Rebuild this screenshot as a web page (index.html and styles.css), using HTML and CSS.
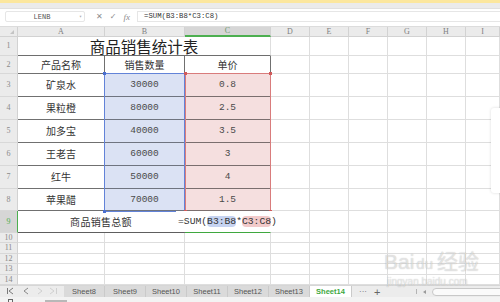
FILE: index.html
```html
<!DOCTYPE html>
<html lang="zh-CN">
<head>
  <meta charset="UTF-8">
  <title>商品销售统计表</title>
  <link rel="stylesheet" href="styles.css">
</head>
<body>
  <div class="app">

    <!-- ribbon edge -->
    <div class="top-strip"></div>
    <div class="ribbon-edge"></div>

    <!-- formula bar -->
    <div class="formula-bar">
      <div class="name-box">LENB<span class="nb-arrow">▾</span></div>
      <div class="fb-icons">
        <span class="fb-x">✕</span>
        <span class="fb-ok">✓</span>
        <span class="fb-fx">fx</span>
      </div>
      <div class="formula-input">=SUM(B3:B8*C3:C8)</div>
    </div>

    <!-- sheet -->
    <div class="sheet">
      <table class="grid">
        <colgroup>
          <col class="c-rh"><col class="c-a"><col class="c-b"><col class="c-c">
          <col class="c-n"><col class="c-n"><col class="c-n"><col class="c-n"><col class="c-n"><col class="c-i">
        </colgroup>
        <tr class="r-head">
          <th class="corner"></th><th class="ch">A</th><th class="ch">B</th><th class="ch ch-active">C</th>
          <th class="ch">D</th><th class="ch">E</th><th class="ch">F</th><th class="ch">G</th><th class="ch">H</th><th class="ch">I</th>
        </tr>
        <tr class="r-title">
          <th class="rh">1</th><td colspan="3" class="title">商品销售统计表</td>
          <td></td><td></td><td></td><td></td><td></td><td></td>
        </tr>
        <tr class="r-field">
          <th class="rh">2</th><td class="tb">产品名称</td><td class="tb">销售数量</td><td class="tb">单价</td>
          <td></td><td></td><td></td><td></td><td></td><td></td>
        </tr>
        <tr class="r-data">
          <th class="rh">3</th><td class="tb">矿泉水</td><td class="tb num qty">30000</td><td class="tb num price">0.8</td>
          <td></td><td></td><td></td><td></td><td></td><td></td>
        </tr>
        <tr class="r-data">
          <th class="rh">4</th><td class="tb">果粒橙</td><td class="tb num qty">80000</td><td class="tb num price">2.5</td>
          <td></td><td></td><td></td><td></td><td></td><td></td>
        </tr>
        <tr class="r-data">
          <th class="rh">5</th><td class="tb">加多宝</td><td class="tb num qty">40000</td><td class="tb num price">3.5</td>
          <td></td><td></td><td></td><td></td><td></td><td></td>
        </tr>
        <tr class="r-data">
          <th class="rh">6</th><td class="tb">王老吉</td><td class="tb num qty">60000</td><td class="tb num price">3</td>
          <td></td><td></td><td></td><td></td><td></td><td></td>
        </tr>
        <tr class="r-data">
          <th class="rh">7</th><td class="tb">红牛</td><td class="tb num qty">50000</td><td class="tb num price">4</td>
          <td></td><td></td><td></td><td></td><td></td><td></td>
        </tr>
        <tr class="r-data r-last">
          <th class="rh">8</th><td class="tb">苹果醋</td><td class="tb num qty">70000</td><td class="tb num price">1.5</td>
          <td></td><td></td><td></td><td></td><td></td><td></td>
        </tr>
        <tr class="r-total">
          <th class="rh rh-active">9</th><td colspan="2" class="tb total">商品销售总额</td><td class="edit-cell"></td>
          <td></td><td></td><td></td><td></td><td></td><td></td>
        </tr>
        <tr class="r-small"><th class="rh">10</th><td></td><td></td><td></td><td></td><td></td><td></td><td></td><td></td><td></td></tr>
        <tr class="r-small r-tall"><th class="rh">11</th><td></td><td></td><td></td><td></td><td></td><td></td><td></td><td></td><td></td></tr>
        <tr class="r-small"><th class="rh">12</th><td></td><td></td><td></td><td></td><td></td><td></td><td></td><td></td><td></td></tr>
        <tr class="r-small r-tall"><th class="rh">13</th><td></td><td></td><td></td><td></td><td></td><td></td><td></td><td></td><td></td></tr>
        <tr class="r-small"><th class="rh">14</th><td></td><td></td><td></td><td></td><td></td><td></td><td></td><td></td><td></td></tr>
      </table>

      <!-- formula reference ranges -->
      <div class="range range-b"><span class="hd tl"></span><span class="hd bl"></span></div>
      <div class="range range-c"><span class="hd tl"></span><span class="hd tr"></span><span class="hd bl"></span><span class="hd br"></span></div>

      <!-- in-cell editor for C9 -->
      <div class="cell-editor">=SUM(<span class="ref ref-b">B3:B8</span>*<span class="ref ref-c">C3:C8</span>)</div>

      <div class="side-panel"></div>
    </div>

    <!-- sheet tabs -->
    <div class="tabbar">
      <svg class="tab-nav" width="64" height="12" viewBox="0 0 64 12">
        <g fill="none" stroke-width="1">
          <path d="M7.5 3v6 M13 3l-4 3 4 3" stroke="#7a7a7a"/>
          <path d="M28 3l-4 3 4 3" stroke="#8a8a8a"/>
          <path d="M38 3l4 3-4 3" stroke="#d0d0d0"/>
          <path d="M50 3l4 3-4 3 M56.5 3v6" stroke="#d0d0d0"/>
        </g>
      </svg>
      <div class="tab">Sheet8</div>
      <div class="tab">Sheet9</div>
      <div class="tab">Sheet10</div>
      <div class="tab">Sheet11</div>
      <div class="tab">Sheet12</div>
      <div class="tab">Sheet13</div>
      <div class="tab tab-active">Sheet14</div>
      <div class="tab-more">···</div>
      <div class="tab-add">+</div>
      <div class="hscroll">
        <span class="hs-grip"></span>
        <span class="hs-left"></span>
        <span class="hs-track"></span>
      </div>
    </div>

    <div class="statusbar">
      <span class="sb-icon"></span>
      <span class="sb-text"></span>
    </div>

    <!-- watermark -->
    <div class="watermark">
      <div class="wm-logo">Bai<span class="wm-du">du</span>经验</div>
      <div class="wm-url">jingyan.baidu.com</div>
    </div>
  </div>
</body>
</html>
```

FILE: styles.css
```css
* {
  box-sizing: border-box;
}

body {
  margin: 0;
  width: 500px;
  height: 302px;
  overflow: hidden;
  background-color: #ffffff;
  color: #333333;
  font-family: "Noto Sans CJK SC", sans-serif;
}

.app {
  position: relative;
  width: 500px;
  height: 302px;
  display: flex;
  flex-direction: column;
  overflow: hidden;
}

.top-strip {
  flex: none;
  height: 3px;
  background-color: #fce79e;
}

.ribbon-edge {
  flex: none;
  height: 6px;
  background-color: #ebebeb;
  border-bottom: 1px solid #e0e0e0;
}

/* formula bar */
.formula-bar {
  flex: none;
  height: 18px;
  display: flex;
  align-items: flex-start;
  padding-top: 2px;
  background-color: #ffffff;
  border-bottom: 1px solid #dcdcdc;
}

.name-box {
  position: relative;
  margin-left: 5px;
  width: 80px;
  height: 11px;
  border: 1px solid #e6e6e6;
  border-radius: 2px;
  display: flex;
  align-items: center;
  justify-content: center;
  padding-right: 6px;
  font-family: "Liberation Mono", monospace;
  font-size: 7px;
  color: #555555;
}

.nb-arrow {
  position: absolute;
  right: 2px;
  top: 1px;
  font-size: 5px;
  color: #aaaaaa;
}

.fb-icons {
  width: 52px;
  height: 11px;
  display: flex;
  align-items: center;
  padding-left: 11px;
  gap: 7px;
  color: #8c8c8c;
  font-family: "DejaVu Sans", sans-serif;
  font-size: 8px;
}

.fb-fx {
  font-family: "Liberation Serif", serif;
  font-style: italic;
  font-size: 9px;
}

.formula-input {
  flex: 1;
  height: 11px;
  border: 1px solid #e6e6e6;
  border-right: none;
  padding-left: 6px;
  font-family: "Liberation Mono", monospace;
  font-size: 7.3px;
  line-height: 9px;
  color: #333333;
}

/* sheet grid */
.sheet {
  flex: none;
  position: relative;
  height: 258px;
  overflow: hidden;
}

.grid {
  width: 500px;
  table-layout: fixed;
  border-collapse: separate;
  border-spacing: 0;
}

.c-rh { width: 18px; }
.c-a { width: 87px; }
.c-b { width: 80px; }
.c-c { width: 86px; }
.c-n { width: 39px; }
.c-i { width: 34px; }

.grid td,
.grid th {
  padding: 0;
  border-right: 1px solid #dedede;
  border-bottom: 1px solid #dedede;
  text-align: center;
  vertical-align: middle;
  white-space: nowrap;
  line-height: 1;
  font-weight: normal;
}

.r-head { height: 10px; }
.r-title { height: 19px; }
.r-field { height: 18px; }
.r-data { height: 23px; }
.r-data.r-last { height: 22px; }
.r-total { height: 22px; }
.r-small { height: 10px; }
.r-small.r-tall { height: 11px; }

.grid .ch {
  background-color: #ebebeb;
  border-right-color: #d2d2d2;
  border-bottom-color: #d2d2d2;
  font-family: "Liberation Serif", serif;
  font-size: 8px;
  color: #808080;
}

.grid .ch-active {
  background-color: #d6d6d6;
  border-bottom: 2px solid #4caf50;
  color: #6f9a6f;
}

.grid .corner {
  position: relative;
  background-color: #ebebeb;
  border-right-color: #d2d2d2;
  border-bottom-color: #d2d2d2;
}

.corner::after {
  content: "";
  position: absolute;
  right: 3px;
  bottom: 2px;
  border-left: 4px solid transparent;
  border-bottom: 4px solid #c4c4c4;
}

.grid .rh {
  background-color: #ebebeb;
  border-right-color: #d2d2d2;
  border-bottom-color: #d8d8d8;
  font-family: "Liberation Serif", serif;
  font-size: 8px;
  line-height: 8px;
  color: #8a8a8a;
}

.grid .rh-active {
  background-color: #d6d6d6;
  border-right: 1px solid #4caf50;
  color: #4caf50;
}

.grid .title {
  border-bottom-color: #6e6e6e;
  font-size: 15.5px;
  line-height: 17px;
  color: #222222;
}

.grid .tb {
  border-right-color: #707070;
  border-bottom-color: #707070;
  font-size: 10px;
  line-height: 12px;
  color: #333333;
}

.grid .total {
  letter-spacing: 0.3px;
  border-bottom-color: #5e5e5e;
}

.grid .num {
  font-family: "Liberation Mono", monospace;
  font-size: 9.5px;
  color: #4a4a4a;
}

.grid .qty {
  background-color: #dbe2f4;
  border-bottom-color: #6f7480;
}

.grid .price {
  background-color: #f5dfdf;
  border-bottom-color: #7a6e6e;
}

.grid .edit-cell {
  border-bottom: 1px solid #3fa83f;
}

/* reference ranges of the formula being edited */
.range {
  position: absolute;
  top: 46px;
  height: 139px;
  pointer-events: none;
}

.range-b {
  left: 104px;
  width: 81px;
  border: 1px solid #6283d8;
}

.range-c {
  left: 185px;
  width: 86px;
  border: 1px solid #d97c7c;
}

.hd {
  position: absolute;
  width: 3px;
  height: 3px;
}

.range-b .hd { background-color: #4a6fd0; }
.range-c .hd { background-color: #d05a5a; }

.hd.tl { left: -2px; top: -2px; }
.hd.tr { right: -2px; top: -2px; }
.hd.bl { left: -2px; bottom: -2px; }
.hd.br { right: -2px; bottom: -2px; }

.cell-editor {
  position: absolute;
  left: 176px;
  top: 184px;
  width: 105px;
  height: 21px;
  padding-left: 2px;
  background-color: #ffffff;
  display: flex;
  align-items: center;
  font-family: "Liberation Mono", monospace;
  font-size: 9.7px;
  color: #333333;
}

.ref {
  border-radius: 4px;
}

.ref-b { background-color: #c6d3f1; }
.ref-c { background-color: #f2caca; }

.side-panel {
  position: absolute;
  left: 491px;
  top: 81px;
  width: 14px;
  height: 85px;
  background-color: #ffffff;
  border-radius: 3px;
  box-shadow: 0 0 3px rgba(0, 0, 0, 0.15);
}

/* sheet tabs */
.tabbar {
  flex: none;
  height: 12px;
  display: flex;
  align-items: stretch;
  background-color: #ececec;
  border-top: 1px solid #d6d6d6;
  font-family: "Liberation Sans", sans-serif;
  font-size: 7.5px;
  color: #555555;
}

.tab-nav {
  flex: none;
  margin-top: -1px;
}

.tab {
  width: 41px;
  display: flex;
  align-items: center;
  justify-content: center;
  background-color: #dadada;
  border-right: 1px solid #cacaca;
}

.tab-active {
  width: 42px;
  background-color: #ffffff;
  color: #3ea83e;
  font-weight: bold;
}

.tab-more,
.tab-add {
  display: flex;
  align-items: center;
  color: #666666;
}

.tab-more {
  margin-left: 7px;
  font-size: 8px;
}

.tab-add {
  margin-left: 7px;
  font-size: 11px;
}

.hscroll {
  flex: 1;
  display: flex;
  align-items: center;
  margin-left: 36px;
  gap: 6px;
}

.hs-grip {
  width: 1px;
  height: 5px;
  background-color: #b4b4b4;
}

.hs-left {
  border-right: 3px solid #9a9a9a;
  border-top: 2px solid transparent;
  border-bottom: 2px solid transparent;
}

.hs-track {
  flex: 1;
  height: 8px;
  margin-right: -6px;
  border: 1px solid #c8c8c8;
  border-radius: 4px 0 0 4px;
  background-color: #fafafa;
}

.statusbar {
  flex: none;
  height: 5px;
  overflow: hidden;
  display: flex;
  align-items: flex-start;
  padding-top: 2px;
  background-color: #f3f3f3;
}

.sb-icon {
  margin-left: 8px;
  width: 5px;
  height: 4px;
  border: 1px solid #666666;
  border-bottom: none;
}

.sb-text {
  margin-left: 32px;
  width: 22px;
  height: 2px;
  margin-top: 1px;
  background-color: #b8b8b8;
}

/* watermark */
.watermark {
  position: absolute;
  left: 384px;
  top: 250px;
  color: rgba(255, 255, 255, 0.55);
  text-shadow: 0 0 1px rgba(0, 0, 0, 0.28);
  pointer-events: none;
}

.wm-logo {
  font-family: "Liberation Sans", "Noto Sans CJK SC", sans-serif;
  font-size: 21px;
  line-height: 24px;
  white-space: nowrap;
}

.wm-du {
  font-size: 15px;
  margin: 0 4px 0 2px;
}

.wm-url {
  font-family: "Liberation Sans", sans-serif;
  font-size: 10px;
  line-height: 12px;
  margin-left: 3px;
}
```
